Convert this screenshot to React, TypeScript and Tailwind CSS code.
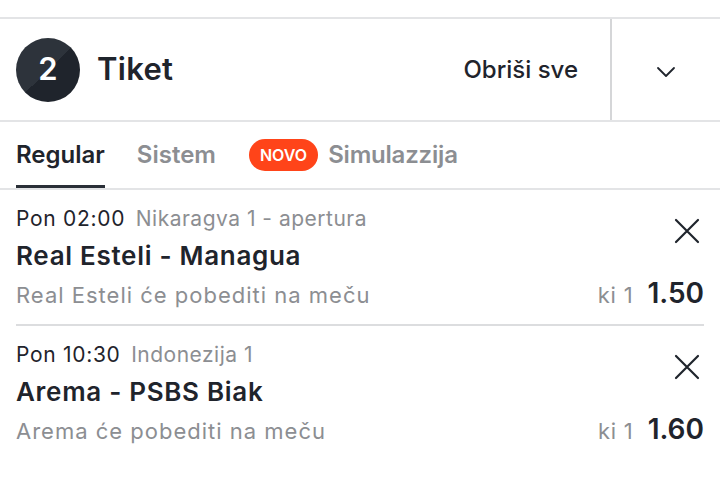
import React from "react";

// Bet slip rows
const bets = [
  {
    time: "Pon 02:00",
    league: "Nikaragva 1 - apertura",
    match: "Real Esteli - Managua",
    pick: "Real Esteli će pobediti na meču",
    market: "ki 1",
    odd: "1.50",
  },
  {
    time: "Pon 10:30",
    league: "Indonezija 1",
    match: "Arema - PSBS Biak",
    pick: "Arema će pobediti na meču",
    market: "ki 1",
    odd: "1.60",
  },
];

function CloseIcon() {
  return (
    <svg width="26" height="26" viewBox="0 0 26 26" fill="none" stroke="#1f242c" strokeWidth="2.2" strokeLinecap="round">
      <path d="M2 2 L24 24 M24 2 L2 24" />
    </svg>
  );
}

export default function App() {
  return (
    <div className="w-[720px] h-[479px] bg-white overflow-hidden font-['Inter',sans-serif] text-[#1f242c]">
      <div className="h-[17px]" />

      {/* HEADER */}
      <div className="flex h-[105px] border-t-2 border-b-2 border-[#e3e4e6]">
        <div className="flex flex-1 items-center pl-4 pr-8">
          <div className="w-16 h-16 rounded-full bg-[linear-gradient(135deg,#2d333b_50%,#1f242c_50%)] flex items-center justify-center text-white text-[31px] font-semibold">
            2
          </div>
          <span className="ml-[17px] text-[31px] font-semibold tracking-[0.3px]">Tiket</span>
          <span className="ml-auto text-[24px] font-medium">Obriši sve</span>
        </div>
        <div className="w-[2px] bg-[#d5d6d8]" />
        <div className="w-[108px] flex items-center justify-center pt-1">
          <svg width="20" height="12" viewBox="0 0 20 12" fill="none" stroke="#1f242c" strokeWidth="1.8" strokeLinecap="round" strokeLinejoin="round">
            <path d="M2 2 L10 10 L18 2" />
          </svg>
        </div>
      </div>

      {/* TABS */}
      <div className="flex items-stretch h-[68px] border-b-2 border-[#e3e4e6] pl-4">
        <div className="flex flex-col justify-center relative">
          <span className="text-[24px] font-semibold">Regular</span>
          <div className="absolute bottom-0 left-0 right-0 h-[3px] bg-[#2a2f37]" />
        </div>
        <span className="self-center ml-8 text-[24px] font-semibold text-[#8c8e92]">Sistem</span>
        <span className="self-center ml-[33px] h-8 px-[11px] rounded-full bg-[#ff4419] text-white text-[16px] font-semibold flex items-center">
          NOVO
        </span>
        <span className="self-center ml-[10px] text-[24px] font-semibold text-[#8c8e92] tracking-[-0.2px]">Simulazzija</span>
      </div>

      {/* BETS */}
      <div className="px-4">
        {bets.map((b, i) => (
          <div key={i} className={`flex pt-[16px] pb-[11px] ${i === 0 ? "border-b-2 border-[#dcdddf]" : ""}`}>
            <div className="flex-1">
              <div className="text-[21px] leading-[26px] tracking-[0.7px]">
                {b.time} <span className="text-[#8c8e92] ml-[4px] tracking-[0.5px]">{b.league}</span>
              </div>
              <div className="text-[26px] font-semibold leading-[38px] mt-[5px] tracking-[0.7px]">{b.match}</div>
              <div className="text-[22px] text-[#8c8e92] leading-[36px] mt-[2px] tracking-[1px]">{b.pick}</div>
            </div>
            <div className="flex flex-col items-end">
              <div className="mt-[12px] mr-1">
                <CloseIcon />
              </div>
              <div className="mt-auto flex items-baseline gap-[14px] leading-[36px]">
                <span className="text-[22px] text-[#8c8e92] tracking-[0.8px]">{b.market}</span>
                <span className="text-[28px] font-semibold">{b.odd}</span>
              </div>
            </div>
          </div>
        ))}
      </div>
    </div>
  );
}
